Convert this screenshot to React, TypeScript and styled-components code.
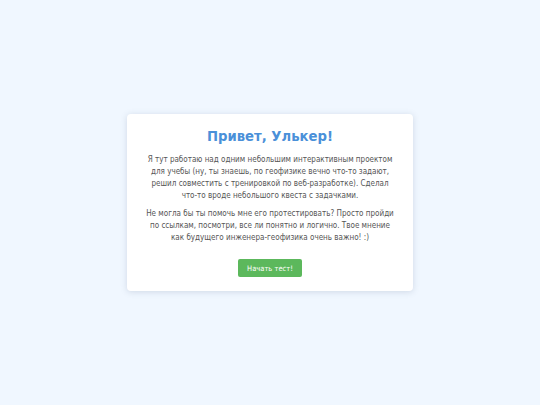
import React from "react";
import styled, { createGlobalStyle } from "styled-components";

const Global = createGlobalStyle`
  html, body { margin: 0; padding: 0; }
  body {
    background: #f0f7ff;
    font-family: "DejaVu Sans Condensed", "DejaVu Sans", Verdana, sans-serif;
  }
`;

const Page = styled.div`
  min-height: 100vh;
  display: flex;
  align-items: center;
  justify-content: center;
`;

const Card = styled.div`
  width: 286px;
  box-sizing: border-box;
  background: #ffffff;
  border-radius: 4px;
  padding: 13px 18px 14px;
  box-shadow: 0 1px 6px rgba(90, 110, 140, 0.22);
  text-align: center;
`;

const Title = styled.h1`
  margin: 0 0 9px;
  font-size: 14.7px;
  line-height: 18px;
  font-weight: bold;
  color: #4a90d9;
`;

const Text = styled.p`
  margin: 0 0 6px;
  font-size: 8px;
  line-height: 12px;
  color: #555555;
`;

const Button = styled.button`
  margin-top: 9px;
  width: 64px;
  height: 18px;
  border: none;
  border-radius: 2px;
  background: #5cb85c;
  color: #ffffff;
  font-family: "DejaVu Sans Condensed", "DejaVu Sans", Verdana, sans-serif;
  font-size: 7.5px;
  padding: 0;
  cursor: pointer;
`;

export default function App() {
  return (
    <>
      <Global />
      <Page>
        <Card>
          <Title>Привет, Улькер!</Title>
          <Text>
            Я тут работаю над одним небольшим интерактивным проектом для учебы (ну, ты знаешь, по геофизике вечно что-то задают, решил совместить с тренировкой по веб-разработке). Сделал что-то вроде небольшого квеста с задачками.
          </Text>
          <Text>
            Не могла бы ты помочь мне его протестировать? Просто пройди по ссылкам, посмотри, все ли понятно и логично. Твое мнение как будущего инженера-геофизика очень важно! :)
          </Text>
          <Button>Начать тест!</Button>
        </Card>
      </Page>
    </>
  );
}
